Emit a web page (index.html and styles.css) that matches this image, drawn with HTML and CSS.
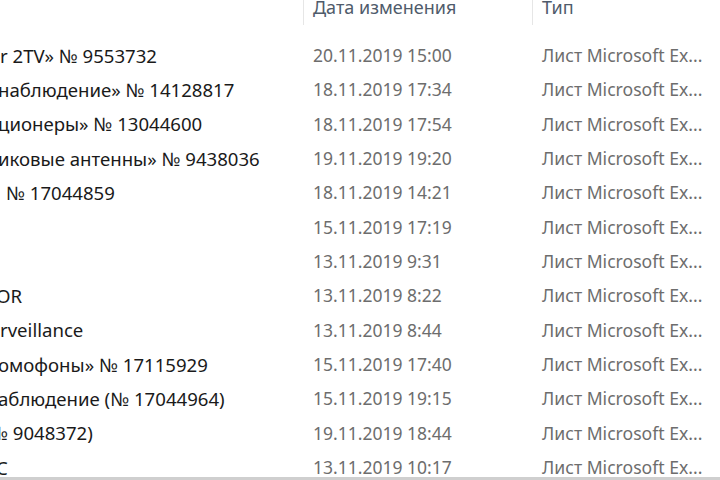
FILE: index.html
```html
<!DOCTYPE html>
<html lang="ru">
  <head>
    <meta charset="UTF-8" />
    <title>Файлы</title>
    <link rel="stylesheet" href="styles.css" />
  </head>
  <body>
    <div class="explorer">
      <div class="header">
        <div class="col-head name-head"></div>
        <div class="col-head">Дата изменения</div>
        <div class="col-head">Тип</div>
      </div>

      <div class="file-list">
        <div class="row">
          <div class="name">r 2TV» № 9553732</div>
          <div class="date">20.11.2019 15:00</div>
          <div class="type">Лист Microsoft Ex...</div>
        </div>
        <div class="row">
          <div class="name cut-s">наблюдение» № 14128817</div>
          <div class="date">18.11.2019 17:34</div>
          <div class="type">Лист Microsoft Ex...</div>
        </div>
        <div class="row">
          <div class="name cut-s">ционеры» № 13044600</div>
          <div class="date">18.11.2019 17:54</div>
          <div class="type">Лист Microsoft Ex...</div>
        </div>
        <div class="row">
          <div class="name cut-s">иковые антенны» № 9438036</div>
          <div class="date">19.11.2019 19:20</div>
          <div class="type">Лист Microsoft Ex...</div>
        </div>
        <div class="row">
          <div class="name indent">№ 17044859</div>
          <div class="date">18.11.2019 14:21</div>
          <div class="type">Лист Microsoft Ex...</div>
        </div>
        <div class="row">
          <div class="name"></div>
          <div class="date">15.11.2019 17:19</div>
          <div class="type">Лист Microsoft Ex...</div>
        </div>
        <div class="row">
          <div class="name"></div>
          <div class="date">13.11.2019 9:31</div>
          <div class="type">Лист Microsoft Ex...</div>
        </div>
        <div class="row">
          <div class="name cut-m">OR</div>
          <div class="date">13.11.2019 8:22</div>
          <div class="type">Лист Microsoft Ex...</div>
        </div>
        <div class="row">
          <div class="name">rveillance</div>
          <div class="date">13.11.2019 8:44</div>
          <div class="type">Лист Microsoft Ex...</div>
        </div>
        <div class="row">
          <div class="name cut-s">омофоны» № 17115929</div>
          <div class="date">15.11.2019 17:40</div>
          <div class="type">Лист Microsoft Ex...</div>
        </div>
        <div class="row">
          <div class="name cut-s">аблюдение (№ 17044964)</div>
          <div class="date">15.11.2019 19:15</div>
          <div class="type">Лист Microsoft Ex...</div>
        </div>
        <div class="row">
          <div class="name cut-l">№ 9048372)</div>
          <div class="date">19.11.2019 18:44</div>
          <div class="type">Лист Microsoft Ex...</div>
        </div>
        <div class="row">
          <div class="name cut-m">C</div>
          <div class="date">13.11.2019 10:17</div>
          <div class="type">Лист Microsoft Ex...</div>
        </div>
      </div>
    </div>
    <div class="scroll-edge"></div>
  </body>
</html>
```

FILE: styles.css
```css
* {
  margin: 0;
  padding: 0;
  box-sizing: border-box;
}

:root {
  --name-color: #1a1a1a;
  --meta-color: #6d6d6d;
  --head-color: #4f5b6b;
  --divider: #e6e6e6;
}

body {
  width: 720px;
  height: 480px;
  overflow: hidden;
  background: #ffffff;
  font-family: "Noto Sans", "Open Sans", sans-serif;
  font-size: 17.5px;
  display: flex;
  flex-direction: column;
}

.explorer {
  flex: 1;
  overflow: hidden;
}

/* Column headers */
.header {
  display: grid;
  grid-template-columns: 303px 229px 1fr;
  height: 38px;
}

.col-head {
  border-left: 1px solid var(--divider);
  height: 26px;
  padding-left: 9px;
  color: var(--head-color);
  font-size: 18px;
  line-height: 16px;
  margin-top: -1px;
}

.name-head {
  border-left: none;
}

/* Rows */
.file-list {
  display: flex;
  flex-direction: column;
}

.row {
  display: grid;
  grid-template-columns: 303px 229px 1fr;
  height: 34.33px;
  align-items: center;
  white-space: nowrap;
}

.name {
  color: var(--name-color);
  font-size: 18.6px;
  overflow: hidden;
}

.date,
.type {
  padding-left: 10px;
  color: var(--meta-color);
}

.type {
  font-size: 17.6px;
}

.cut-s {
  margin-left: -2px;
}

.cut-m {
  margin-left: -4px;
}

.cut-l {
  margin-left: -11px;
}

.indent {
  padding-left: 6px;
}

.scroll-edge {
  height: 3px;
  background: #cfcfcf;
}
```
